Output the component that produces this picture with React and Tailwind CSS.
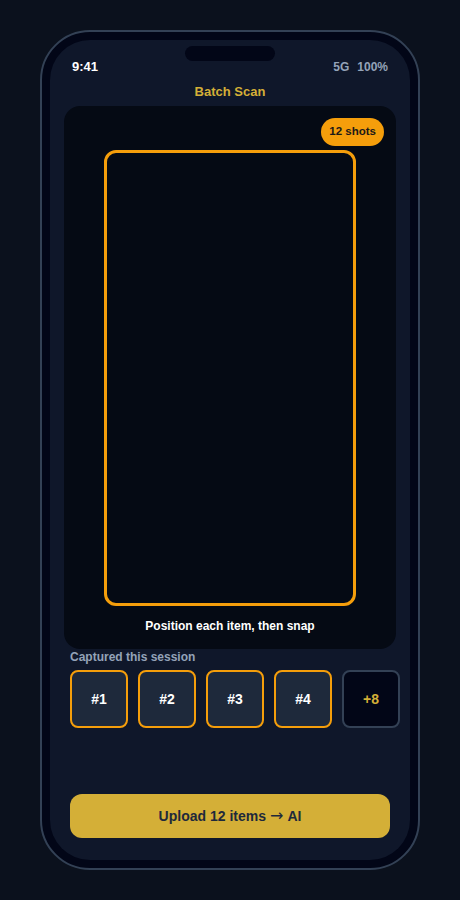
import React from "react";

export default function App() {
  const thumbs = ["#1", "#2", "#3", "#4"];
  return (
    <div
      className="w-[460px] h-[900px] bg-[#0b111d] flex justify-center pt-[30px] overflow-hidden"
      style={{ fontFamily: '"Liberation Sans", Arial, sans-serif' }}
    >
      <div className="w-[380px] h-[840px] rounded-[50px] border-2 border-[#334155] bg-[#020617] p-2">
        <div className="relative h-full rounded-[40px] bg-[#0f172a] overflow-hidden flex flex-col">
          <div className="absolute top-[6px] left-1/2 -translate-x-1/2 w-[90px] h-[15px] rounded-full bg-[#020617]" />
          <div className="flex items-center justify-between px-[22px] pt-[17px] h-[37px]">
            <span className="text-[13px] font-bold text-white leading-5">9:41</span>
            <div className="flex items-center gap-2 text-[12px] font-bold text-[#94a3b8] leading-5">
              <span>5G</span>
              <span>100%</span>
            </div>
          </div>
          <div className="mt-[6px] text-center text-[13px] font-bold text-[#d4af37] leading-[18px]">
            Batch Scan
          </div>
          <div className="relative mx-3.5 mt-[5px] h-[543px] rounded-2xl bg-[#050a14] flex flex-col items-center pt-[44px]">
            <div className="absolute top-3 right-3 h-7 px-[8px] rounded-full bg-[#f59e0b] flex items-center text-[11.5px] font-bold text-[#1c1917]">
              12 shots
            </div>
            <div className="w-[252px] h-[456px] rounded-xl border-[3px] border-[#f59e0b]" />
            <div className="mt-[11px] text-[12px] font-bold text-white leading-[18px]">
              Position each item, then snap
            </div>
          </div>
          <div className="px-5">
            <div className="text-[12px] font-bold text-[#94a3b8] leading-4">
              Captured this session
            </div>
            <div className="flex gap-2.5 mt-[5px]">
              {thumbs.map((t) => (
                <div
                  key={t}
                  className="w-[58px] h-[58px] shrink-0 rounded-lg border-2 border-[#f59e0b] bg-[#1e293b] flex items-center justify-center text-[14px] font-bold text-white"
                >
                  {t}
                </div>
              ))}
              <div className="w-[58px] h-[58px] shrink-0 rounded-lg border-2 border-[#334155] bg-[#020617] flex items-center justify-center text-[14px] font-bold text-[#d4af37]">
                +8
              </div>
            </div>
          </div>
          <div className="flex-1" />
          <div className="mx-5 mb-[22px] h-11 rounded-xl bg-[#d4af37] flex items-center justify-center text-[14px] font-bold text-[#1e293b]">
            <span>Upload 12 items</span>
            <span className="mx-[4px] font-normal text-[16px] leading-none" style={{ fontFamily: '"DejaVu Sans", sans-serif' }}>→</span>
            <span>AI</span>
          </div>
        </div>
      </div>
    </div>
  );
}
